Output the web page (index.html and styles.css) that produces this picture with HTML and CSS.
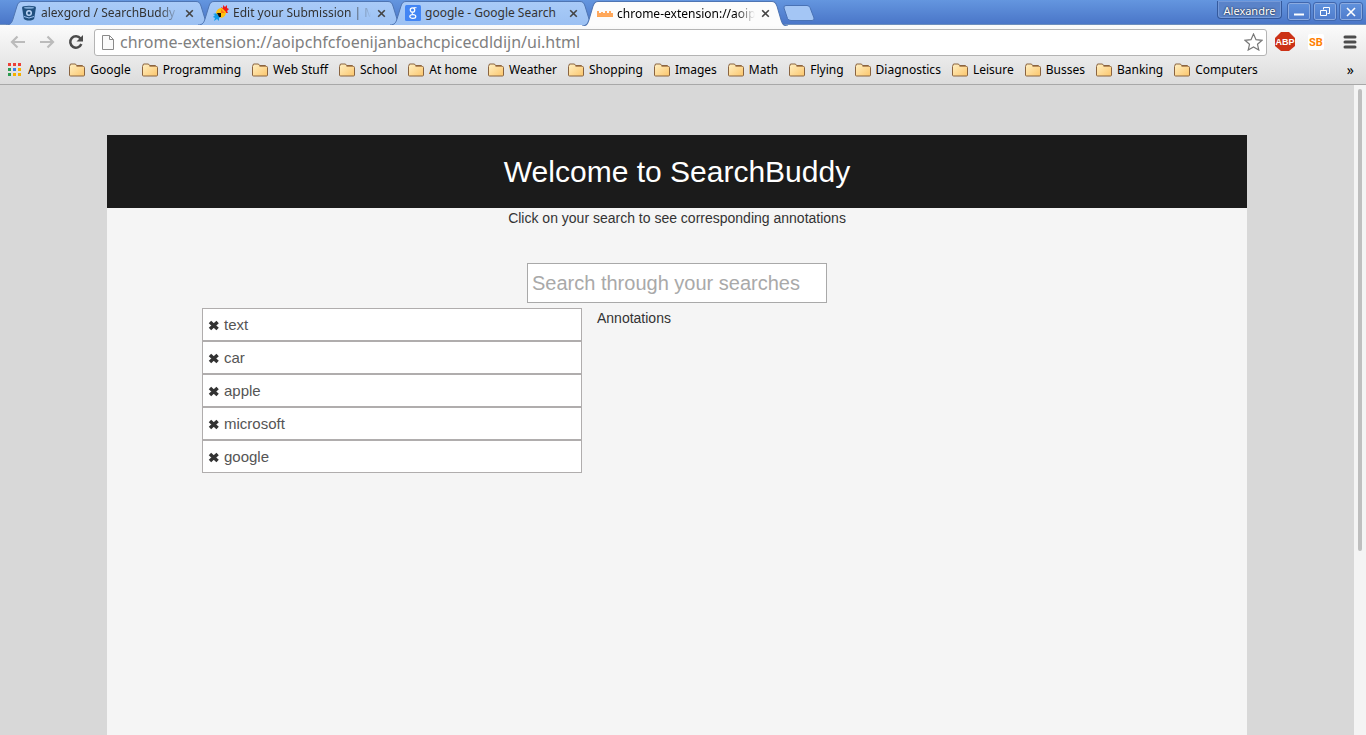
FILE: index.html
```html
<!DOCTYPE html>
<html lang="en">
<head>
    <meta charset="UTF-8">
    <meta name="viewport" content="width=device-width, initial-scale=1.0">
    <title>SearchBuddy</title>
    <link rel="stylesheet" href="styles.css">
</head>
<body>
    <!-- shared shapes -->
    <svg class="defs" width="0" height="0" aria-hidden="true">
        <defs>
            <linearGradient id="folder-fill" x1="0" y1="0" x2="1" y2="1">
                <stop offset="0" stop-color="#fff0c4"/>
                <stop offset="1" stop-color="#fbc66c"/>
            </linearGradient>
            <linearGradient id="tab-fill" x1="0" y1="0" x2="0" y2="1">
                <stop offset="0" stop-color="#a9cbf8"/>
                <stop offset="1" stop-color="#9cc1f3"/>
            </linearGradient>
            <symbol id="folder" viewBox="0 0 16 14">
                <path d="M.5 3.5L1.500 1H6.500L7.500 2.500H13.500L14.500 3.500Q15.500 3.500 15.500 4.500V12Q15.500 13 14.500 13H1.500Q.5 13 .5 12Z" fill="url(#folder-fill)" stroke="#8a6440"/>
                <path d="M7.500 3.500H14" stroke="#b98d5a"/>
            </symbol>
            <symbol id="tab" viewBox="0 0 206 24" preserveAspectRatio="none">
                <path d="M0 24C5 24 6 21 7 18L11 5C12 2 13 .5 16 .5H190C193 .5 194 2 195 5L199 18C200 21 201 24 206 24"/>
            </symbol>
            <symbol id="close" viewBox="0 0 9 9">
                <path d="M1.200 1.200L7.800 7.800M7.800 1.200L1.200 7.800" stroke="#444" stroke-width="1.600"/>
            </symbol>
            <symbol id="remove" viewBox="0 0 11 10">
                <path d="M1.800 1.700L8.800 8.300M8.800 1.700L1.800 8.300" stroke="#333" stroke-width="3.200"/>
            </symbol>
        </defs>
    </svg>

    <header class="browser">
        <div class="tabstrip">
            <div class="tab">
                <svg class="tab-shape"><use href="#tab"/></svg>
                <svg class="favicon" viewBox="0 0 16 16"><path d="M1 2.500Q1 .8 8 .8T15 2.500L13.200 13.500Q12 15.500 8 15.500T2.800 13.500Z" fill="#20507f"/><ellipse cx="8" cy="2.800" rx="5" ry="1" fill="#7fa8d4"/><circle cx="8" cy="8" r="3" fill="#bcd6f7"/><circle cx="8" cy="8" r="1.500" fill="#20507f"/><path d="M3 11.500Q8 14.500 13 11.500" fill="none" stroke="#9cc1f3"/></svg>
                <span class="tab-title fade">alexgord / SearchBuddy</span>
                <button class="tab-close" aria-label="Close tab"><svg width="9" height="9"><use href="#close"/></svg></button>
            </div>
            <div class="tab">
                <svg class="tab-shape"><use href="#tab"/></svg>
                <svg class="favicon" viewBox="0 0 16 16"><path d="M8 2L10 3 10 0 12 2 14 0 14 3 16 4 14 6 15 8 11 8Z" fill="#f01818"/><path d="M4 8L7 13 6 13 6 16 4 14 1 16 2 13 0 12 2 10 0 9Z" fill="#109ce8"/><path d="M3 8Q4 3 9 3L13 7Q13 12 8 13Z" fill="#ffc20e"/><path d="M4 8H8V12H6Z" fill="#111"/><path d="M8 4L12 8H8Z" fill="#ff7a12"/></svg>
                <span class="tab-title fade">Edit your Submission | M</span>
                <button class="tab-close" aria-label="Close tab"><svg width="9" height="9"><use href="#close"/></svg></button>
            </div>
            <div class="tab">
                <svg class="tab-shape"><use href="#tab"/></svg>
                <svg class="favicon" viewBox="0 0 16 16"><rect width="16" height="16" rx="1.500" fill="#4285f4"/><circle cx="7.500" cy="5" r="2.200" fill="none" stroke="#fff" stroke-width="1.300"/><path d="M8.500 2.700H11.500M7.500 7.300Q6 8.300 8.500 9.500" fill="none" stroke="#fff"/><ellipse cx="7.800" cy="11.500" rx="3" ry="1.900" fill="none" stroke="#fff" stroke-width="1.200"/></svg>
                <span class="tab-title">google - Google Search</span>
                <button class="tab-close" aria-label="Close tab"><svg width="9" height="9"><use href="#close"/></svg></button>
            </div>
            <div class="tab active">
                <svg class="tab-shape"><use href="#tab"/></svg>
                <svg class="favicon" viewBox="0 0 16 16"><path d="M1 5V11M3 7V11M5 6V11M7 7V11M9 5V11M11 7V11M13 5V11M15 7V11" stroke="#ff8c2a" stroke-width="1.500"/><path d="M0 10.500H16M2 8H8M10 8H15" stroke="#ffa652"/></svg>
                <span class="tab-title fade">chrome-extension://aoip</span>
                <button class="tab-close" aria-label="Close tab"><svg width="9" height="9"><use href="#close"/></svg></button>
            </div>
            <button class="new-tab" aria-label="New tab">
                <svg width="32" height="16" viewBox="0 0 32 16"><path d="M3 .5H24Q26 .5 27 2.500L31 13Q31.500 15.500 29 15.500H8Q5.500 15.500 4.500 13.500L1 3Q.5 .5 3 .5Z" fill="#a4c6f5" stroke="#4972b5"/></svg>
            </button>
            <div class="window-controls">
                <button class="user">Alexandre</button>
                <button class="win-btn" aria-label="Minimize"><svg width="12" height="12"><path d="M1 8.500H11" stroke="#fff" stroke-width="2"/></svg></button>
                <button class="win-btn" aria-label="Restore"><svg width="12" height="12" fill="none" stroke="#fff"><path d="M4.500 3.500V1.500H10.500V7.500H8.500M1.500 4.500H7.500V9.500H1.500Z"/></svg></button>
                <button class="win-btn" aria-label="Close"><svg width="12" height="12"><path d="M2 2L10 10M10 2L2 10" stroke="#fff" stroke-width="1.600"/></svg></button>
            </div>
        </div>

        <div class="toolbar">
            <button class="nav-btn" aria-label="Back"><svg width="16" height="14" fill="none" stroke="#bbb" stroke-width="2.200"><path d="M15 7H2M7.500 1.500L2 7L7.500 12.500"/></svg></button>
            <button class="nav-btn" aria-label="Forward"><svg width="16" height="14" fill="none" stroke="#bbb" stroke-width="2.200"><path d="M1 7H14M8.500 1.500L14 7L8.500 12.500"/></svg></button>
            <button class="nav-btn" aria-label="Reload"><svg width="16" height="16" viewBox="0 0 16 16"><path d="M12.500 4.500A5.700 5.700 0 1 0 13.300 10" fill="none" stroke="#4b4b4b" stroke-width="2.500"/><path d="M15 1V7.500H8.500Z" fill="#4b4b4b"/></svg></button>
            <div class="omnibox">
                <svg width="12" height="15" viewBox="0 0 12 15"><path d="M.5 .5H7.500L11.500 4.500V14.500H.5ZM7.500 .5V4.500H11.500" fill="#fafafa" stroke="#8a8a8a"/></svg>
                <input type="text" class="url" aria-label="Address" value="chrome-extension://aoipchfcfoenijanbachcpicecdldijn/ui.html">
                <svg width="19" height="18" viewBox="0 0 19 18"><path d="M9.500 1L12 6.700L18 7.300L13.500 11.300L14.800 17L9.500 14L4.200 17L5.500 11.300L1 7.300L7 6.700Z" fill="#fff" stroke="#777" stroke-width="1.200"/></svg>
            </div>
            <button class="ext-btn" aria-label="Adblock Plus"><svg width="20" height="20" viewBox="0 0 20 20"><path d="M6 0H14L20 6V14L14 19H6L0 14V6Z" fill="#cc3217"/><text x="10" y="13" class="abp">ABP</text></svg></button>
            <button class="ext-btn" aria-label="SearchBuddy"><svg width="16" height="16" viewBox="0 0 16 16"><rect width="16" height="16" rx="2" fill="#fff"/><text x="8" y="12" class="sb">SB</text></svg></button>
            <button class="ext-btn menu-btn" aria-label="Menu"><svg width="14" height="14"><path d="M2 2H12M2 7H12M2 12H12" stroke="#4c4c4c" stroke-width="3" stroke-linecap="round"/></svg></button>
        </div>

        <nav class="bookmarks">
            <a href="#" class="apps"><svg width="14" height="14" viewBox="0 0 14 14"><path d="M0 0h3v3H0zM5 0h3v3H5zM10 0h3v3h-3z" fill="#ec4037"/><path d="M0 5h3v3H0zM0 10h3v3H0z" fill="#2c9b50"/><path d="M5 5h3v3H5z" fill="#3b7eea"/><path d="M10 5h3v3h-3zM5 10h3v3H5zM10 10h3v3h-3z" fill="#f5b000"/></svg>Apps</a>
            <a href="#"><svg width="16" height="14"><use href="#folder"/></svg>Google</a>
            <a href="#"><svg width="16" height="14"><use href="#folder"/></svg>Programming</a>
            <a href="#"><svg width="16" height="14"><use href="#folder"/></svg>Web Stuff</a>
            <a href="#"><svg width="16" height="14"><use href="#folder"/></svg>School</a>
            <a href="#"><svg width="16" height="14"><use href="#folder"/></svg>At home</a>
            <a href="#"><svg width="16" height="14"><use href="#folder"/></svg>Weather</a>
            <a href="#"><svg width="16" height="14"><use href="#folder"/></svg>Shopping</a>
            <a href="#"><svg width="16" height="14"><use href="#folder"/></svg>Images</a>
            <a href="#"><svg width="16" height="14"><use href="#folder"/></svg>Math</a>
            <a href="#"><svg width="16" height="14"><use href="#folder"/></svg>Flying</a>
            <a href="#"><svg width="16" height="14"><use href="#folder"/></svg>Diagnostics</a>
            <a href="#"><svg width="16" height="14"><use href="#folder"/></svg>Leisure</a>
            <a href="#"><svg width="16" height="14"><use href="#folder"/></svg>Busses</a>
            <a href="#"><svg width="16" height="14"><use href="#folder"/></svg>Banking</a>
            <a href="#"><svg width="16" height="14"><use href="#folder"/></svg>Computers</a>
            <button class="more" aria-label="More bookmarks">»</button>
        </nav>
    </header>

    <div class="viewport">
        <main class="page">
            <div class="container">
                <h1>Welcome to SearchBuddy</h1>
                <p class="hint">Click on your search to see corresponding annotations</p>
                <input type="text" class="search" placeholder="Search through your searches" aria-label="Search through your searches">
                <div class="row">
                    <ul class="searches">
                        <li><button class="remove" aria-label="Remove text"><svg width="12" height="11"><use href="#remove"/></svg></button><button class="term">text</button></li>
                        <li><button class="remove" aria-label="Remove car"><svg width="12" height="11"><use href="#remove"/></svg></button><button class="term">car</button></li>
                        <li><button class="remove" aria-label="Remove apple"><svg width="12" height="11"><use href="#remove"/></svg></button><button class="term">apple</button></li>
                        <li><button class="remove" aria-label="Remove microsoft"><svg width="12" height="11"><use href="#remove"/></svg></button><button class="term">microsoft</button></li>
                        <li><button class="remove" aria-label="Remove google"><svg width="12" height="11"><use href="#remove"/></svg></button><button class="term">google</button></li>
                    </ul>
                    <div class="annotations">Annotations</div>
                </div>
            </div>
        </main>
        <div class="scrollbar"><div class="thumb"></div></div>
    </div>
</body>
</html>
```

FILE: styles.css
```css
* {
    box-sizing: border-box;
}
body {
    margin: 0;
    height: 100vh;
    display: flex;
    flex-direction: column;
    overflow: hidden;
    font-family: "Liberation Sans", Arial, sans-serif;
    font-size: 14px;
    line-height: 20px;
    color: #333;
}
button {
    padding: 0;
    border: none;
    background: none;
    font: inherit;
    color: inherit;
    cursor: pointer;
}
svg {
    display: block;
    flex: none;
}
.defs {
    position: absolute;
}

/* browser frame */
.browser {
    flex: none;
    font-family: "Noto Sans", sans-serif;
    font-size: 12px;
    color: #000;
    background: linear-gradient(#fbfbfb 25px, #dcdcdc);
    border-bottom: 1px solid #a8a8a8;
}
.tabstrip {
    display: flex;
    height: 25px;
    padding: 1px 0 0 6px;
    background: linear-gradient(#6496df, #4a76c8);
    border-bottom: 1px solid #6e8fbd;
}
.tab {
    position: relative;
    display: flex;
    align-items: center;
    width: 206px;
    height: 24px;
    margin-right: -14px;
    padding: 0 15px;
    color: #333;
}
.tab-shape {
    position: absolute;
    top: 0;
    left: 0;
    width: 100%;
    height: 100%;
    fill: url(#tab-fill);
    stroke: #4e75b3;
}
.tab.active {
    z-index: 1;
    height: 25px;
    color: #000;
}
.tab.active .tab-shape {
    fill: #fcfcfc;
}
.favicon {
    position: relative;
    width: 16px;
    height: 16px;
}
.tab-title {
    position: relative;
    flex: 1;
    min-width: 0;
    margin: 0 6px 0 4px;
    white-space: nowrap;
}
.fade {
    -webkit-mask-image: linear-gradient(to right, #000 86%, transparent);
    mask-image: linear-gradient(to right, #000 86%, transparent);
}
.tab-close {
    position: relative;
    margin-right: 3px;
}
.new-tab {
    margin: 0 0 0 9px;
}
.window-controls {
    display: flex;
    gap: 4px;
    margin-left: auto;
    padding-right: 4px;
}
.user {
    height: 18px;
    width: 65px;
    margin-right: 2px;
    border: 1px solid #34599c;
    border-top: none;
    border-radius: 0 0 4px 4px;
    box-shadow: inset 0 0 0 1px #7499d8;
    background: #5a83c9;
    color: #fff;
    font-size: 11px;
    line-height: 20px;
    text-shadow: 0 0 2px #000;
}
.win-btn {
    display: grid;
    place-items: center;
    width: 22px;
    height: 17px;
    margin-top: 2px;
    border: 1px solid #8cabe0;
    border-radius: 2px;
    outline: 1px solid #4067ae;
}
.toolbar {
    display: flex;
    align-items: center;
    height: 34px;
    padding: 0 9px 0 10px;
}
.nav-btn {
    margin-right: 13px;
}
.omnibox {
    flex: 1;
    display: flex;
    align-items: center;
    height: 27px;
    margin: 0 8px 0 -3px;
    padding: 0 3px 0 7px;
    background: #fff;
    border: 1px solid #b4b4b4;
    border-radius: 3px;
}
.url {
    flex: 1;
    min-width: 0;
    margin: 0 0 0 6px;
    padding: 0;
    border: none;
    outline: none;
    background: none;
    font: 16px/22px "Noto Sans", sans-serif;
    color: #808080;
}
.ext-btn {
    margin-right: 13px;
}
.menu-btn {
    margin: 0 0 0 6px;
}
.abp {
    font: bold 9px "Liberation Sans", sans-serif;
    fill: #fff;
    text-anchor: middle;
}
.sb {
    font: bold 11px Roboto, sans-serif;
    fill: #ff8000;
    text-anchor: middle;
}
.bookmarks {
    display: flex;
    align-items: center;
    gap: 11px;
    height: 25px;
    padding: 0 12px 3px 8px;
    white-space: nowrap;
}
.bookmarks a {
    display: flex;
    align-items: center;
    gap: 5px;
    color: #000;
    text-decoration: none;
}
.bookmarks .apps {
    gap: 6px;
    margin-right: 2px;
}
.more {
    margin-left: auto;
    font-size: 14px;
}

/* extension page */
.viewport {
    flex: 1;
    min-height: 0;
    display: flex;
}
.page {
    flex: 1;
    display: flex;
    padding-top: 50px;
    background: #d8d8d8;
}
.container {
    width: 100%;
    max-width: 1140px;
    margin: 0 auto;
    background: #f5f5f5;
}
h1 {
    margin: 0;
    padding: 20px 0;
    background: #1b1b1b;
    color: #fff;
    font-size: 30px;
    font-weight: normal;
    line-height: 33px;
    text-align: center;
}
.hint {
    margin: 0 0 35px;
    text-align: center;
}
.search {
    display: block;
    width: 300px;
    height: 40px;
    margin: 0 auto 5px;
    padding: 0 4px;
    border: 1px solid #a9a9a9;
    background: #fff;
    font: 20px "Liberation Sans", Arial, sans-serif;
}
.search::placeholder {
    color: #a9a9a9;
}
.row {
    display: grid;
    grid-template-columns: repeat(12, 1fr);
}
.searches {
    grid-column: 2 / span 4;
    margin: 0;
    padding: 0;
    list-style: none;
}
.searches li {
    display: flex;
    align-items: center;
    gap: 4px;
    height: 33px;
    padding: 0 5px;
    background: #fff;
    border: 1px solid #b0adad;
}
.remove {
    padding-top: 1px;
}
.term {
    flex: 1;
    color: #555;
    font-size: 15px;
    text-align: left;
}
.annotations {
    grid-column: 6 / span 6;
    padding-left: 15px;
}
.scrollbar {
    width: 12px;
    padding: 4px;
    background: #f4f4f4;
}
.thumb {
    height: 72%;
    background: #bfbfbf;
    border-radius: 2px;
}
```
